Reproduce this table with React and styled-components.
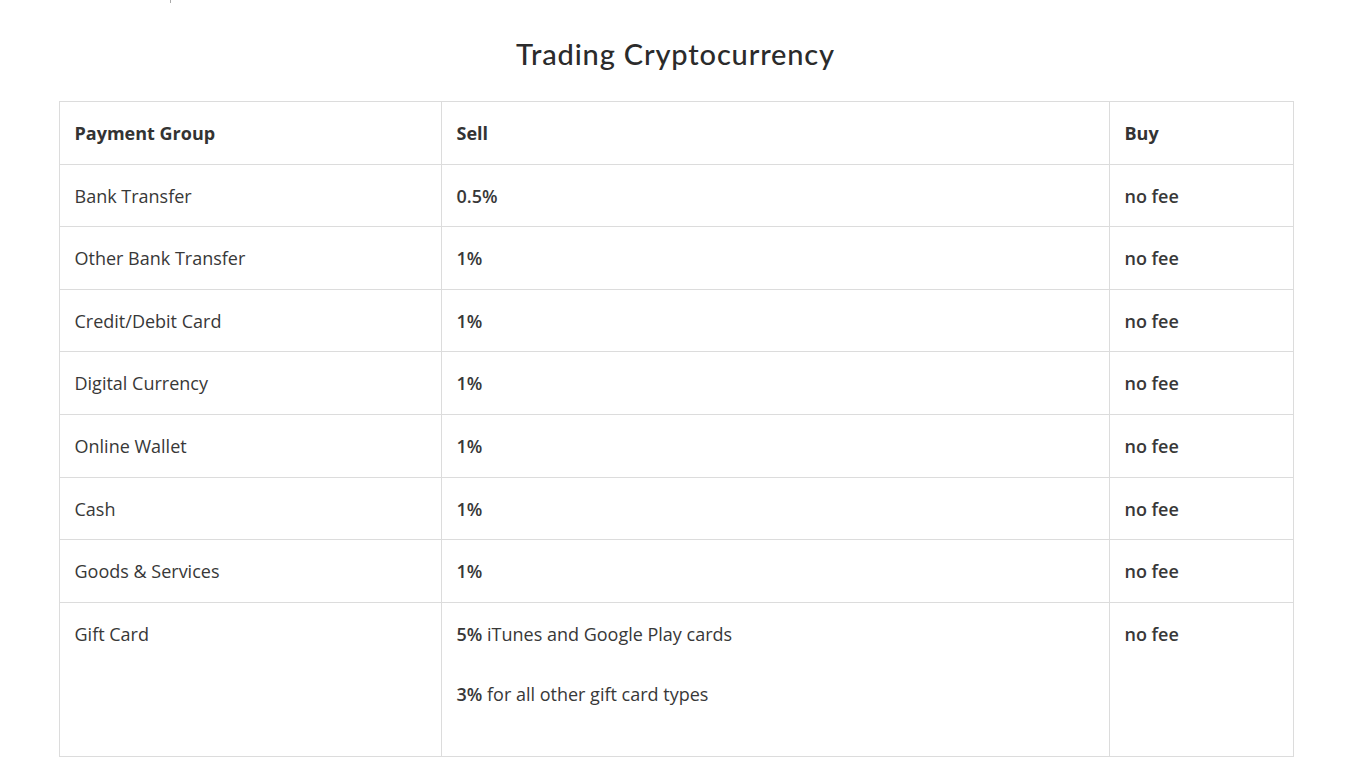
import React from 'react';
import styled, { createGlobalStyle } from 'styled-components';

const GlobalStyle = createGlobalStyle`
  html, body {
    margin: 0;
    padding: 0;
    background: #fff;
  }
  body {
    font-family: "Open Sans", "Liberation Sans", sans-serif;
    color: #333;
  }
`;

const Page = styled.div`
  width: 1234px;
  margin: 0 auto;
  padding-left: 2px;
`;

const Crumb = styled.div`
  height: 0;
  position: relative;
`;

const CrumbMark = styled.span`
  position: absolute;
  left: 111px;
  top: -3px;
  width: 1px;
  height: 6px;
  background: #aaa;
`;

const Title = styled.h2`
  margin: 0 0 29px;
  padding-top: 36px;
  text-align: center;
  font-family: "Lato", "Noto Sans", sans-serif;
  font-weight: 500;
  font-size: 29px;
  letter-spacing: 0.85px;
  line-height: 36px;
  color: #2b2b2b;
`;

const Table = styled.table`
  width: 1234px;
  border-collapse: collapse;
  table-layout: fixed;
  font-size: 18px;
`;

const Cell = styled.td`
  border: 1px solid #dcdcdc;
  padding: 17px 16px 16.6px 15px;
  line-height: 28px;
  vertical-align: top;
  font-weight: ${(p) => (p.$bold ? 600 : 400)};
  color: #383838;
`;

const HeadCell = styled(Cell).attrs({ as: 'th' })`
  text-align: left;
  font-weight: 700;
  color: #333;
`;

const Note = styled.p`
  margin: 0 0 32px;

  b {
    font-weight: 600;
  }
`;

const rows = [
  ['Bank Transfer', '0.5%'],
  ['Other Bank Transfer', '1%'],
  ['Credit/Debit Card', '1%'],
  ['Digital Currency', '1%'],
  ['Online Wallet', '1%'],
  ['Cash', '1%'],
  ['Goods & Services', '1%'],
];

export default function App() {
  return (
    <>
      <GlobalStyle />
      <Page>
        <Crumb>
          <CrumbMark />
        </Crumb>
        <Title>Trading Cryptocurrency</Title>
        <Table>
          <colgroup>
            <col style={{ width: 382 }} />
            <col style={{ width: 668 }} />
            <col style={{ width: 184 }} />
          </colgroup>
          <thead>
            <tr>
              <HeadCell>Payment Group</HeadCell>
              <HeadCell>Sell</HeadCell>
              <HeadCell>Buy</HeadCell>
            </tr>
          </thead>
          <tbody>
            {rows.map(([group, sell]) => (
              <tr key={group}>
                <Cell>{group}</Cell>
                <Cell $bold>{sell}</Cell>
                <Cell $bold>no fee</Cell>
              </tr>
            ))}
            <tr>
              <Cell>Gift Card</Cell>
              <Cell>
                <Note>
                  <b>5%</b> iTunes and Google Play cards
                </Note>
                <Note>
                  <b>3%</b> for all other gift card types
                </Note>
              </Cell>
              <Cell $bold>no fee</Cell>
            </tr>
          </tbody>
        </Table>
      </Page>
    </>
  );
}
